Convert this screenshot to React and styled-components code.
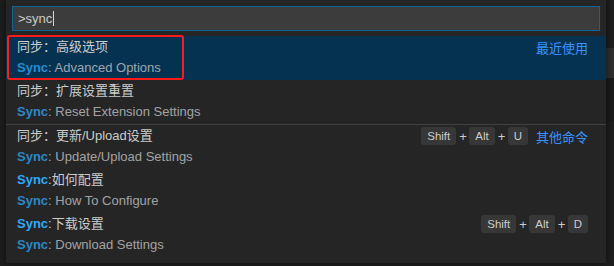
import React from "react";
import styled, { createGlobalStyle } from "styled-components";

const Global = createGlobalStyle`
  html, body { margin: 0; padding: 0; background: #1e1e1e; }
  body { width: 614px; height: 266px; overflow: hidden; font-family: "Liberation Sans", "Noto Sans CJK SC", sans-serif; }
`;

const Page = styled.div`
  display: flex;
  width: 614px;
  height: 266px;
`;

const Gutter = styled.div`
  width: 6px;
  background: #1e1e1e;
`;

const RightStrip = styled.div`
  width: 8px;
  display: flex;
  flex-direction: column;
  background: #1e1e1e;
`;

const StripBlock = styled.div`
  height: ${(p) => p.$h}px;
  background: ${(p) => p.$c};
`;

const Panel = styled.div`
  width: 600px;
  height: 263px;
  background: #252526;
  box-shadow: 0 0 8px rgba(0, 0, 0, 0.6);
  display: flex;
  flex-direction: column;
  padding-top: 6px;
  box-sizing: border-box;
  position: relative;
`;

const InputWrap = styled.div`
  padding: 0 6px;
  margin-bottom: 5px;
`;

const Input = styled.div`
  height: 25px;
  box-sizing: border-box;
  background: #3c3c3c;
  border: 1px solid #0e639c;
  display: flex;
  align-items: center;
  padding-left: 5px;
  color: #cccccc;
  font-size: 13px;
`;

const Caret = styled.span`
  display: inline-block;
  width: 1px;
  height: 15px;
  background: #d4d4d4;
  margin-left: 1px;
`;

const List = styled.div`
  display: flex;
  flex-direction: column;
`;

const Row = styled.div`
  position: relative;
  height: 44px;
  display: flex;
  padding: 0 18px 0 11px;
  background: ${(p) => (p.$selected ? "#063252" : "transparent")};
  border-top: ${(p) => (p.$separator ? "1px solid #414141" : "none")};
`;

const Lines = styled.div`
  flex: 1;
  display: flex;
  flex-direction: column;
`;

const Label = styled.div`
  height: 22px;
  line-height: 22px;
  font-size: 13px;
  color: #cccccc;
  white-space: nowrap;
`;

const Desc = styled.div`
  height: 22px;
  line-height: 20px;
  font-size: 13px;
  color: #cccccc;
  opacity: 0.75;
  white-space: nowrap;
`;

const Hl = styled.span`
  color: #2aaaff;
  font-weight: bold;
`;

const Side = styled.div`
  height: 22px;
  display: flex;
  align-items: center;
  gap: 0;
  font-size: 13px;
`;

const Group = styled.span`
  color: #3794ff;
  margin-left: 8px;
`;

const Key = styled.span`
  display: inline-flex;
  align-items: center;
  height: 18px;
  padding: 0 6px;
  border-radius: 3px;
  background: #373737;
  color: #cccccc;
  font-size: 11.5px;
  box-sizing: border-box;
`;

const Plus = styled.span`
  color: #cccccc;
  font-size: 13px;
  margin: 0 3px;
  width: 7px;
  text-align: center;
`;

const Outline = styled.div`
  position: absolute;
  left: 1px;
  top: -1px;
  width: 177px;
  height: 45px;
  border: 2px solid #ff1a1a;
  border-radius: 3px;
  box-sizing: border-box;
  pointer-events: none;
`;

const Keys = ({ keys }) => (
  <>
    {keys.map((k, i) => (
      <React.Fragment key={k}>
        {i > 0 && <Plus>+</Plus>}
        <Key>{k}</Key>
      </React.Fragment>
    ))}
  </>
);

const items = [
  {
    label: <>同步：高级选项</>,
    desc: <><Hl>Sync</Hl>: Advanced Options</>,
    selected: true,
    group: "最近使用",
  },
  {
    label: <>同步：扩展设置重置</>,
    desc: <><Hl>Sync</Hl>: Reset Extension Settings</>,
  },
  {
    label: <>同步：更新/Upload设置</>,
    desc: <><Hl>Sync</Hl>: Update/Upload Settings</>,
    separator: true,
    keys: ["Shift", "Alt", "U"],
    group: "其他命令",
  },
  {
    label: <><Hl>Sync</Hl>:如何配置</>,
    desc: <><Hl>Sync</Hl>: How To Configure</>,
  },
  {
    label: <><Hl>Sync</Hl>:下载设置</>,
    desc: <><Hl>Sync</Hl>: Download Settings</>,
    keys: ["Shift", "Alt", "D"],
  },
];

export default function App() {
  return (
    <>
      <Global />
      <Page>
        <Gutter />
        <Panel>
          <InputWrap>
            <Input>
              &gt;sync<Caret />
            </Input>
          </InputWrap>
          <List>
            {items.map((it, i) => (
              <Row key={i} $selected={it.selected} $separator={it.separator}>
                {it.selected && <Outline />}
                <Lines>
                  <Label>{it.label}</Label>
                  <Desc>{it.desc}</Desc>
                </Lines>
                <Side>
                  {it.keys && <Keys keys={it.keys} />}
                  {it.group && <Group>{it.group}</Group>}
                </Side>
              </Row>
            ))}
          </List>
        </Panel>
        <RightStrip>
          <StripBlock $h={48} $c="#1e1e1e" />
          <StripBlock $h={30} $c="#2f2f2f" />
          <StripBlock $h={43} $c="#1b1b1b" />
          <StripBlock $h={145} $c="#1e1e1e" />
        </RightStrip>
      </Page>
    </>
  );
}
